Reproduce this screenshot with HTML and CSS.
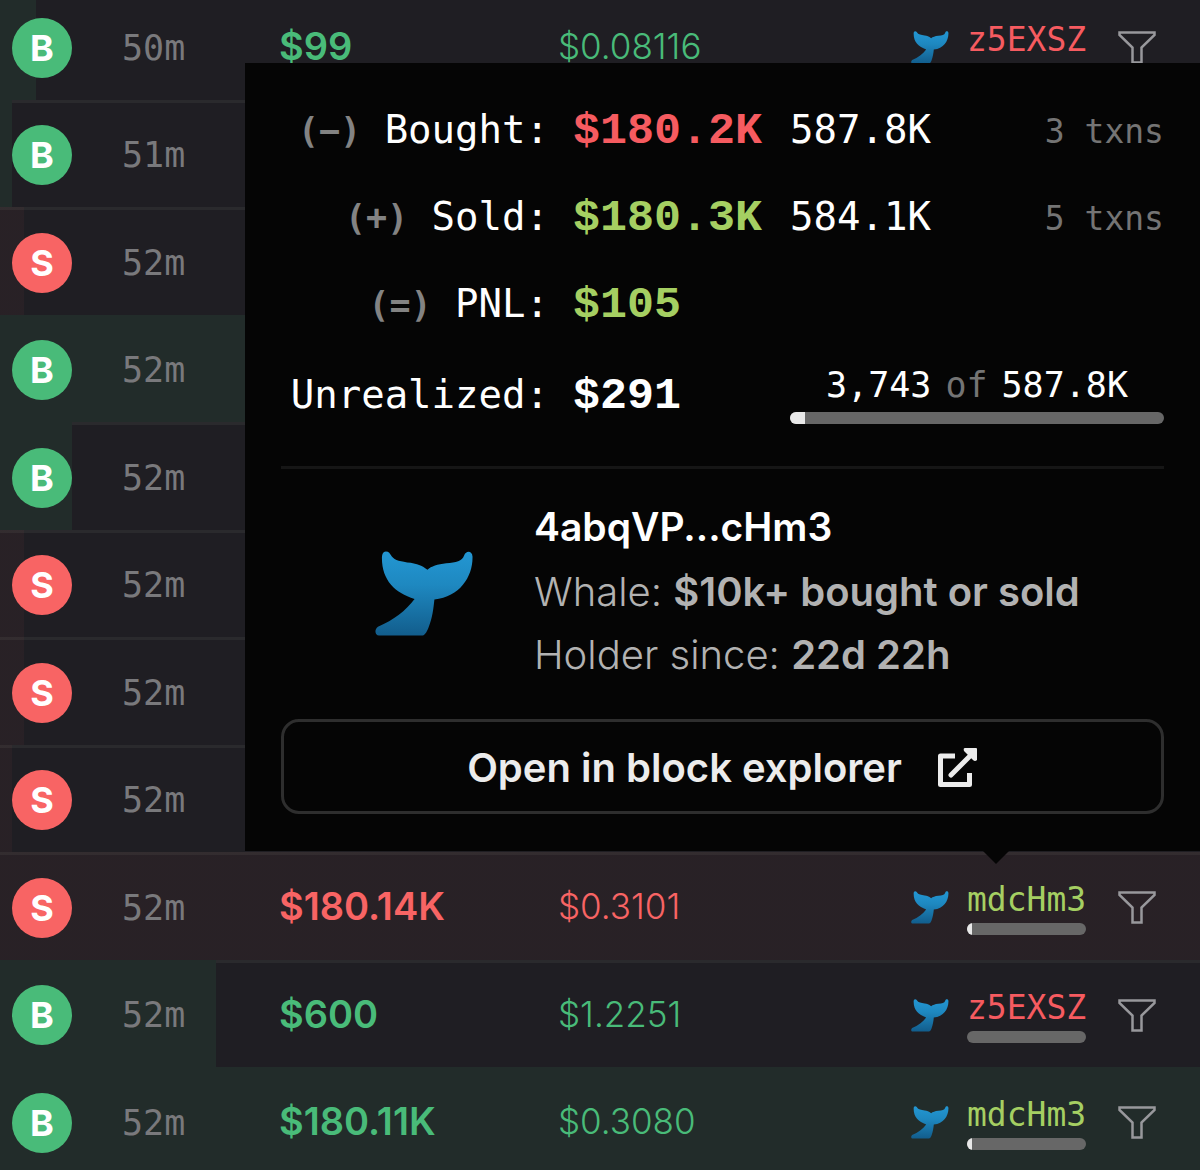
FILE: index.html
```html
<!DOCTYPE html>
<html lang="en">
<head>
<meta charset="utf-8">
<meta name="viewport" content="width=device-width, initial-scale=1">
<title>Trades</title>
<link rel="stylesheet" href="styles.css">
</head>
<body>
<svg class="defs" aria-hidden="true">
  <defs>
    <linearGradient id="tail" x1="0" y1="0" x2="0" y2="1">
      <stop offset="0" stop-color="#2397d3"/>
      <stop offset="0.4" stop-color="#1e88c0"/>
      <stop offset="1" stop-color="#125d8c"/>
    </linearGradient>
    <symbol id="whale" viewBox="0 0 100 86">
      <path fill="url(#tail)" d="M11 0C8 0 7 3 7 7C7 29 20 42 40 48C31 60 19 69 3 76C-1 79 0 85 4 85H47C50 85 52 82 54 77C58 67 59 58 60 48.500C86 46 99 25 98.500 5C98 -1 92 -1 90 4C88 10 82 11 72 12C63 13 57 15 53 18.500C47 14 42 12.500 36 11.500C26 10 20 9 17 5C15 2 14 0 11 0Z"/>
    </symbol>
    <symbol id="filter" viewBox="0 0 38 33">
      <path fill="none" stroke="currentColor" stroke-width="2.500" d="M1.500 1.500H36.500V4L23.500 16.500V31.500H14.500V16.500L1.500 4Z"/>
    </symbol>
  </defs>
</svg>
<main class="feed">
  <table class="trades">
    <colgroup><col class="c-side"><col class="c-time"><col class="c-amount"><col><col class="c-maker"><col class="c-filter"></colgroup>
    <tbody>
      <tr class="buy" style="--fill:3%"><td><span class="badge">B</span></td><td class="time">50m</td><td class="amount">$99</td><td class="price">$0.08116</td>
        <td><div class="maker"><svg class="tail"><use href="#whale"/></svg><div class="who"><a class="red" href="#z5">z5EXSZ</a><span class="bar"></span></div></div></td>
        <td><button class="filter" aria-label="Filter by maker"><svg><use href="#filter"/></svg></button></td></tr>
      <tr class="buy" style="--fill:1%"><td><span class="badge">B</span></td><td class="time">51m</td><td></td><td></td><td></td><td></td></tr>
      <tr class="sell" style="--fill:2%"><td><span class="badge">S</span></td><td class="time">52m</td><td></td><td></td><td></td><td></td></tr>
      <tr class="buy" style="--fill:100%"><td><span class="badge">B</span></td><td class="time">52m</td><td></td><td></td><td></td><td></td></tr>
      <tr class="buy" style="--fill:6%"><td><span class="badge">B</span></td><td class="time">52m</td><td></td><td></td><td></td><td></td></tr>
      <tr class="sell" style="--fill:2%"><td><span class="badge">S</span></td><td class="time">52m</td><td></td><td></td><td></td><td></td></tr>
      <tr class="sell" style="--fill:2%"><td><span class="badge">S</span></td><td class="time">52m</td><td></td><td></td><td></td><td></td></tr>
      <tr class="sell" style="--fill:1%"><td><span class="badge">S</span></td><td class="time">52m</td><td></td><td></td><td></td><td></td></tr>
      <tr class="sell" style="--fill:100%"><td><span class="badge">S</span></td><td class="time">52m</td><td class="amount">$180.14K</td><td class="price">$0.3101</td>
        <td><div class="maker"><svg class="tail"><use href="#whale"/></svg><div class="who"><a class="lime" href="#md">mdcHm3</a><span class="bar"><i style="width:4%"></i></span></div></div></td>
        <td><button class="filter" aria-label="Filter by maker"><svg><use href="#filter"/></svg></button></td></tr>
      <tr class="buy" style="--fill:18%"><td><span class="badge">B</span></td><td class="time">52m</td><td class="amount">$600</td><td class="price">$1.2251</td>
        <td><div class="maker"><svg class="tail"><use href="#whale"/></svg><div class="who"><a class="red" href="#z5">z5EXSZ</a><span class="bar"></span></div></div></td>
        <td><button class="filter" aria-label="Filter by maker"><svg><use href="#filter"/></svg></button></td></tr>
      <tr class="buy" style="--fill:100%"><td><span class="badge">B</span></td><td class="time">52m</td><td class="amount">$180.11K</td><td class="price">$0.3080</td>
        <td><div class="maker"><svg class="tail"><use href="#whale"/></svg><div class="who"><a class="lime" href="#md">mdcHm3</a><span class="bar"><i style="width:4%"></i></span></div></div></td>
        <td><button class="filter" aria-label="Filter by maker"><svg><use href="#filter"/></svg></button></td></tr>
    </tbody>
  </table>

  <aside class="popover">
    <table class="stats">
      <colgroup><col class="s-label"><col class="s-value"><col><col></colgroup>
      <tbody>
        <tr><th scope="row"><b>(−)</b> Bought:</th><td class="usd red">$180.2K</td><td>587.8K</td><td class="txns">3 txns</td></tr>
        <tr><th scope="row"><b>(+)</b> Sold:</th><td class="usd lime">$180.3K</td><td>584.1K</td><td class="txns">5 txns</td></tr>
        <tr><th scope="row"><b>(=)</b> PNL:</th><td class="usd lime">$105</td><td></td><td></td></tr>
        <tr class="open"><th scope="row">Unrealized:</th><td class="usd">$291</td>
          <td class="holding" colspan="2"><div class="held"><span class="ratio"><span>3,743</span><span class="dim">of</span><span>587.8K</span></span><span class="bar"><i style="width:4%"></i></span></div></td></tr>
      </tbody>
    </table>
    <section class="profile">
      <svg class="big-tail"><use href="#whale"/></svg>
      <div class="facts">
        <h2>4abqVP...cHm3</h2>
        <p>Whale: <strong>$10k+ bought or sold</strong></p>
        <p>Holder since: <strong>22d 22h</strong></p>
      </div>
    </section>
    <button class="explorer">Open in block explorer
      <svg viewBox="0 0 40 40" aria-hidden="true"><path fill="none" stroke="currentColor" stroke-width="5" stroke-linejoin="round" d="M17 8H2.500V36.500H31.500V25"/><path fill="none" stroke="currentColor" stroke-width="5" stroke-linecap="round" d="M13 27L34 6"/><path fill="currentColor" d="M27 0H38Q39 0 39 1V12Q37 14 35 12L26 3Q25 0 27 0Z"/></svg>
    </button>
  </aside>
</main>
</body>
</html>
```
FILE: styles.css
```css
* { box-sizing: border-box; }

body {
  margin: 0;
  background: #1f1e23;
  color: #fff;
  font-family: Inter, "Liberation Sans", sans-serif;
  overflow: hidden;
}

.defs { position: absolute; width: 0; height: 0; }

.feed { position: relative; overflow: hidden; }

/* Trades list */
.trades {
  width: 100%;
  margin-top: -8px;
  table-layout: fixed;
  border-collapse: collapse;
}
.c-side { width: 122px; }
.c-time { width: 157px; }
.c-amount { width: 279px; }
.c-maker { width: 207px; }
.c-filter { width: 82px; }

.trades td { padding: 3px 0 0; vertical-align: middle; }
.trades tr {
  height: 107px;
  background:
    linear-gradient(var(--tint), var(--tint)) 0 0 / var(--fill) 100% no-repeat,
    linear-gradient(#2a2a2d, #2a2a2d) 0 0 / 100% 3px no-repeat;
}
.trades tr:nth-child(odd) { height: 108px; }
.buy { --tint: #222c2a; --tone: #49bb79; }
.sell { --tint: rgba(248, 100, 100, 0.045); --tone: #f86464; }

.badge {
  display: grid;
  place-items: center;
  width: 60px;
  height: 60px;
  margin-left: 12px;
  border-radius: 50%;
  background: var(--tone);
  font-size: 36px;
  font-weight: 700;
}
.time {
  font: 35px/40px "DejaVu Sans Mono", monospace;
  color: #79797c;
}
.trades .amount, .trades .price { padding: 0; color: var(--tone); }
.amount { font-size: 38px; font-weight: 600; }
.price { font-size: 35px; font-weight: 300; }

.maker { display: flex; align-items: center; gap: 18px; }
.tail { width: 38px; height: 33px; }
.who { display: flex; flex-direction: column; gap: 3px; width: 119px; }
.who a {
  font: 33px/40px "DejaVu Sans Mono", monospace;
  text-decoration: none;
}
.red { color: #f65b60; }
.lime { color: #a5cf62; }

.bar {
  display: block;
  height: 12px;
  border-radius: 6px;
  background: #676767;
  overflow: hidden;
}
.bar i { display: block; height: 100%; background: #e8e8e8; }

.filter {
  display: block;
  padding: 0;
  border: 0;
  background: none;
  color: #98989c;
}
.filter svg { display: block; width: 38px; height: 33px; }

/* Maker popover */
.popover {
  position: absolute;
  top: 63px;
  left: 245px;
  right: 0;
  padding: 24px 36px 37px;
  background: #050505;
}
.popover::after {
  content: "";
  position: absolute;
  top: 100%;
  right: 191px;
  border: 13px solid transparent;
  border-top-color: #050505;
  border-bottom: 0;
}

.stats {
  width: 100%;
  table-layout: fixed;
  border-collapse: collapse;
  font: 39px/44px "DejaVu Sans Mono", monospace;
  border-bottom: 3px solid #161616;
}
.s-label { width: 292px; }
.s-value { width: 217px; }
.stats tr { height: 87px; }
.stats tr.open { height: 119px; }
.stats th, .stats td {
  padding: 21px 0 0;
  text-align: left;
  vertical-align: baseline;
  white-space: nowrap;
}
.stats th { padding-right: 24px; font-weight: 400; text-align: right; }
.stats b { font-size: 35px; color: #838383; }
.stats .usd { font: 700 45px/44px "Liberation Mono", monospace; }
.stats .txns { font-size: 33px; text-align: right; color: #747474; }
.stats .open th, .stats .open td { padding-top: 25px; }
.stats .open .holding { padding: 0 0 27px; vertical-align: middle; }
.held { display: flex; flex-direction: column; gap: 5px; }
.ratio { display: flex; justify-content: center; gap: 14px; font-size: 35px; }
.dim { color: #747474; }

.profile {
  display: grid;
  grid-template-columns: 159px 1fr;
  align-items: center;
  padding: 25px 0 33px 94px;
}
.big-tail { width: 99px; height: 86px; margin-top: 8px; }
.facts { display: grid; grid-template-rows: 66px 63px 63px; align-items: center; color: #b2b2b2; }
.facts h2, .facts p { margin: 0; white-space: nowrap; }
.facts h2 { font-size: 39px; font-weight: 600; color: #fff; }
.facts p { font-size: 40px; font-weight: 300; }
.facts strong { font-weight: 600; }

.explorer {
  display: flex;
  align-items: center;
  justify-content: center;
  gap: 36px;
  width: 100%;
  height: 95px;
  padding: 4px 0 0;
  border: 3px solid #2e2e2e;
  border-radius: 18px;
  background: none;
  color: #ececec;
  font: 600 40px/48px Inter, "Liberation Sans", sans-serif;
}
.explorer svg { width: 40px; height: 40px; }
```
